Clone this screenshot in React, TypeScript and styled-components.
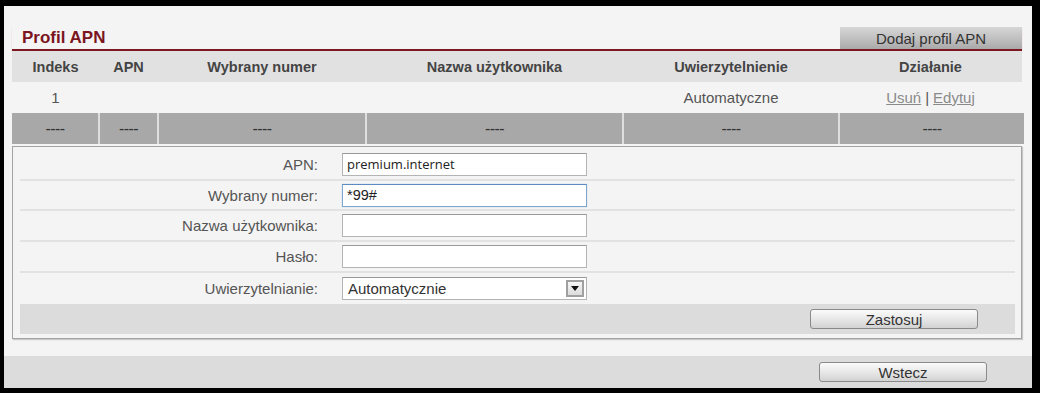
import React from "react";
import styled, { createGlobalStyle } from "styled-components";

const GlobalStyle = createGlobalStyle`
  html, body { margin: 0; padding: 0; background: #000; }
  body { font-family: "Liberation Sans", Arial, sans-serif; }
  * { box-sizing: border-box; }
`;

const Frame = styled.div`
  width: 1040px;
  height: 393px;
  padding: 6px 8px 5px 4px;
  background: #000;
`;

const Panel = styled.div`
  width: 1028px;
  height: 382px;
  background: #f4f4f4;
  display: flex;
  flex-direction: column;
`;

const Content = styled.div`
  padding: 21px 10px 0 8px;
  display: flex;
  flex-direction: column;
`;

const TitleBar = styled.div`
  display: flex;
  justify-content: space-between;
  align-items: flex-end;
  height: 24px;
  border-bottom: 2px solid #7e1820;
  box-shadow: 0 1px 1px #e8b4b8;
`;

const Title = styled.h2`
  margin: 0 0 2px 10px;
  font-size: 17px;
  font-weight: bold;
  color: #7b1621;
  line-height: 18px;
`;

const AddTab = styled.div`
  width: 182px;
  height: 22px;
  background: linear-gradient(#d6d6d6, #bdbdbd 60%, #a9a9a9);
  color: #333;
  font-size: 15px;
  display: flex;
  align-items: center;
  justify-content: center;
`;

const cols = "87px 59px 208px 257px 216px 183px";

const Row = styled.div<{ $bg: string; $h: number }>`
  display: grid;
  grid-template-columns: ${cols};
  height: ${(p) => p.$h}px;
  background: ${(p) => p.$bg};
`;

const DashRow = styled.div`
  display: grid;
  grid-template-columns: 86px 57px 206px 255px 214px 184px;
  column-gap: 2px;
  height: 31px;
  margin-top: 1px;
  background: #dedede;
`;

const Cell = styled.div<{ $bold?: boolean; $color?: string }>`
  display: flex;
  align-items: center;
  justify-content: center;
  font-size: ${(p) => (p.$bold ? "14.5px" : "15px")};
  font-weight: ${(p) => (p.$bold ? "bold" : "normal")};
  color: ${(p) => p.$color ?? "#444"};
`;

const DashCell = styled(Cell)`
  background: #a8a8a8;
  color: #333;
  font-weight: normal;
  font-size: 16px;
  letter-spacing: -0.6px;
`;

const Link = styled.a`
  color: #8a8a8a;
  text-decoration: underline;
  cursor: pointer;
`;

const Sep = styled.span`
  color: #555;
  margin: 0 4px;
`;

const FormBox = styled.div`
  margin-top: 2px;
  height: 193px;
  border: 1px solid #a3a3a3;
  box-shadow: 1px 1px 1px #c8c8c8;
  padding: 3px 6px 4px 7px;
  display: flex;
  flex-direction: column;
`;

const FormRow = styled.div<{ $last?: boolean }>`
  display: grid;
  grid-template-columns: 298px 245px;
  column-gap: 24px;
  align-items: center;
  height: 31px;
  border-bottom: ${(p) => (p.$last ? "none" : "2px solid #e2e2e2")};
`;

const Label = styled.label`
  text-align: right;
  font-size: 15px;
  color: #555;
`;

const Input = styled.div<{ $focus?: boolean; $font?: string; $size?: number }>`
  height: 23px;
  background: #fff;
  border: 1px solid ${(p) => (p.$focus ? "#7fa6cf" : "#b4b4b4")};
  border-top-color: ${(p) => (p.$focus ? "#5d8ac0" : "#999")};
  box-shadow: ${(p) => (p.$focus ? "0 0 1px #9cc0e6" : "none")};
  padding: 0 4px;
  display: flex;
  align-items: center;
  font-family: ${(p) => p.$font ?? '"Liberation Sans", Arial, sans-serif'};
  font-size: ${(p) => p.$size ?? 14.5}px;
  color: #222;
`;

const Select = styled.div`
  height: 23px;
  background: #fff;
  border: 1px solid #b4b4b4;
  border-top-color: #999;
  display: flex;
  align-items: center;
  justify-content: space-between;
  padding: 0 2px 0 5px;
  font-size: 15px;
  color: #333;
`;

const ArrowBox = styled.div`
  width: 18px;
  height: 17px;
  border: 2px solid #a0a0a0;
  background: linear-gradient(#f6f6f6, #dcdcdc);
  display: flex;
  align-items: center;
  justify-content: center;
`;

const ApplyBar = styled.div`
  height: 30px;
  margin-top: 1px;
  background: #dcdcdc;
  display: flex;
  align-items: center;
  justify-content: flex-end;
  padding-right: 37px;
`;

const Button = styled.button`
  width: 168px;
  height: 20px;
  border: 1px solid #8a8a8a;
  border-radius: 3px;
  background: linear-gradient(#fbfbfb, #e6e6e6 55%, #d2d2d2);
  font-family: "Liberation Sans", Arial, sans-serif;
  font-size: 15px;
  color: #333;
  padding: 0;
  display: flex;
  align-items: center;
  justify-content: center;
`;

const Footer = styled.div`
  margin-top: auto;
  height: 32px;
  background: #dcdcdc;
  display: flex;
  align-items: center;
  justify-content: flex-end;
  padding-right: 45px;
`;

const headers = [
  "Indeks",
  "APN",
  "Wybrany numer",
  "Nazwa użytkownika",
  "Uwierzytelnienie",
  "Działanie",
];

export default function App() {
  return (
    <>
      <GlobalStyle />
      <Frame>
        <Panel>
          <Content>
            <TitleBar>
              <Title>Profil APN</Title>
              <AddTab>Dodaj profil APN</AddTab>
            </TitleBar>
            <Row $bg="#e1e1e1" $h={31}>
              {headers.map((h) => (
                <Cell key={h} $bold>
                  {h}
                </Cell>
              ))}
            </Row>
            <Row $bg="#f4f4f4" $h={30}>
              <Cell $color="#555">1</Cell>
              <Cell />
              <Cell />
              <Cell />
              <Cell $color="#555">Automatyczne</Cell>
              <Cell>
                <Link>Usuń</Link>
                <Sep>|</Sep>
                <Link>Edytuj</Link>
              </Cell>
            </Row>
            <DashRow>
              {headers.map((h) => (
                <DashCell key={h}>----</DashCell>
              ))}
            </DashRow>
            <FormBox>
              <FormRow>
                <Label>APN:</Label>
                <Input $font='"Open Sans", "DejaVu Sans", sans-serif' $size={13}>
                  premium.internet
                </Input>
              </FormRow>
              <FormRow>
                <Label>Wybrany numer:</Label>
                <Input $focus>*99#</Input>
              </FormRow>
              <FormRow>
                <Label>Nazwa użytkownika:</Label>
                <Input />
              </FormRow>
              <FormRow>
                <Label>Hasło:</Label>
                <Input />
              </FormRow>
              <FormRow $last>
                <Label>Uwierzytelnianie:</Label>
                <Select>
                  <span>Automatycznie</span>
                  <ArrowBox>
                    <svg width="8" height="5" viewBox="0 0 8 5">
                      <path d="M0 0 L8 0 L4 5 Z" fill="#111" />
                    </svg>
                  </ArrowBox>
                </Select>
              </FormRow>
              <ApplyBar>
                <Button>Zastosuj</Button>
              </ApplyBar>
            </FormBox>
          </Content>
          <Footer>
            <Button>Wstecz</Button>
          </Footer>
        </Panel>
      </Frame>
    </>
  );
}
